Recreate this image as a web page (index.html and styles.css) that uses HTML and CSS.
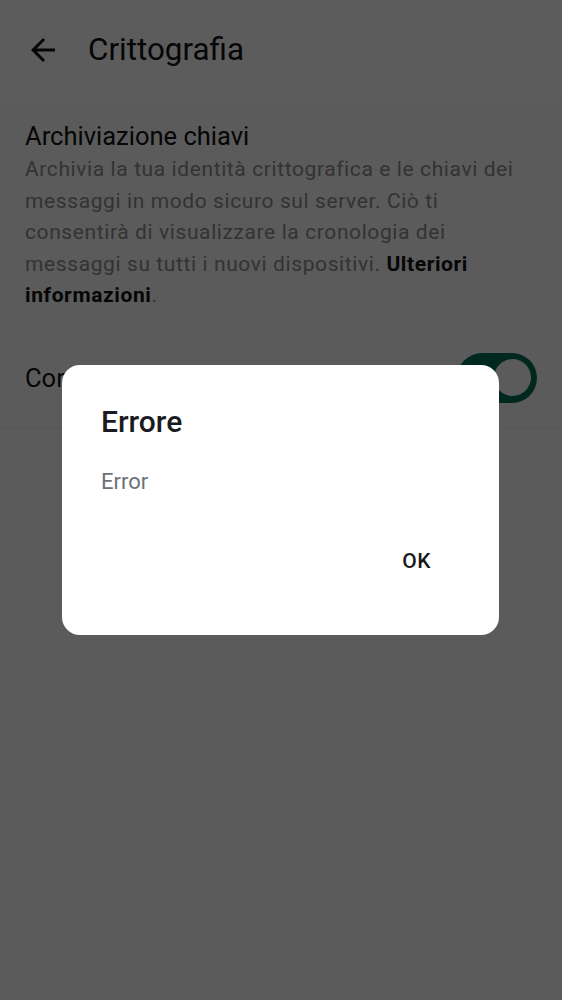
FILE: index.html
```html
<!DOCTYPE html>
<html lang="it">
<head>
<meta charset="utf-8">
<title>Crittografia</title>
<link rel="stylesheet" href="styles.css">
</head>
<body>
<div class="page">
  <header class="appbar">
    <svg class="back" viewBox="0 0 24 24" width="36" height="36"><path d="M20 11H7.83l5.59-5.59L12 4l-8 8 8 8 1.41-1.41L7.83 13H20v-2z" fill="#111"/></svg>
    <h1 class="appbar-title">Crittografia</h1>
  </header>
  <section class="section">
    <h2 class="section-title">Archiviazione chiavi</h2>
    <p class="section-text">Archivia la tua identità crittografica e le chiavi dei messaggi in modo sicuro sul server. Ciò ti consentirà di visualizzare la cronologia dei messaggi su tutti i nuovi dispositivi. <b>Ulteriori informazioni</b>.</p>
  </section>
  <div class="row">
    <span class="row-label">Consenti archiviazione chiavi</span>
    <span class="switch"><span class="thumb"></span></span>
  </div>
</div>
<div class="scrim">
  <div class="dialog">
    <h3 class="dialog-title">Errore</h3>
    <p class="dialog-msg">Error</p>
    <div class="dialog-actions"><button class="btn">OK</button></div>
  </div>
</div>
</body>
</html>
```
FILE: styles.css
```css
html, body {
  margin: 0;
  padding: 0;
  background: #fbfbfb;
  font-family: Roboto, "Noto Sans", sans-serif;
}
.page {
  height: 1000px;
  overflow: hidden;
}
.appbar {
  height: 100px;
  display: flex;
  align-items: center;
  padding-left: 25px;
  gap: 27px;
  background: #ffffff;
}
.back { display: block; }
.appbar-title {
  margin: 0;
  font-size: 31.4px;
  font-weight: 400;
  color: #111;
  padding-bottom: 2px;
}
.section {
  padding: 20px 45px 0 25px;
}
.section-title {
  margin: 0;
  font-size: 25.5px;
  font-weight: 400;
  line-height: 32px;
  color: #111;
}
.section-text {
  margin: 2px 0 0;
  font-size: 21px;
  line-height: 31.5px;
  letter-spacing: 0.6px;
  color: #8e8e8e;
}
.section-text b {
  font-weight: 700;
  color: #111;
}
.row {
  margin-top: 16px;
  height: 100px;
  display: flex;
  align-items: center;
  justify-content: space-between;
  padding: 0 25px;
  border-bottom: 1px solid #ececec;
}
.row-label {
  font-size: 25.5px;
  color: #111;
}
.switch {
  width: 80px;
  height: 50px;
  border-radius: 25px;
  background: #007057;
  display: flex;
  align-items: center;
  justify-content: flex-end;
  padding-right: 6px;
  box-sizing: border-box;
  flex-shrink: 0;
}
.thumb {
  width: 37px;
  height: 37px;
  border-radius: 50%;
  background: #fbfbfb;
}
.scrim {
  position: fixed;
  inset: 0;
  background: rgba(0, 0, 0, 0.64);
  display: flex;
  align-items: center;
  justify-content: center;
}
.dialog {
  width: 437px;
  height: 270px;
  box-sizing: border-box;
  background: #fff;
  border-radius: 18px;
  padding-top: 39px;
  margin-left: -1px;
}
.dialog-title {
  margin: 0;
  padding-left: 39px;
  font-size: 30px;
  line-height: 36px;
  font-weight: 500;
  color: #1b1b1f;
}
.dialog-msg {
  margin: 27px 0 0;
  padding-left: 39px;
  font-size: 22px;
  line-height: 30px;
  color: #6b717a;
}
.dialog-actions {
  display: flex;
  justify-content: flex-end;
  padding: 40px 52px 0 0;
}
.btn {
  border: 0;
  background: transparent;
  font-family: Roboto, "Noto Sans", sans-serif;
  font-size: 21px;
  font-weight: 500;
  color: #1a1a1a;
  height: 48px;
  line-height: 48px;
  padding: 0 16px;
  letter-spacing: 0.5px;
}
```
